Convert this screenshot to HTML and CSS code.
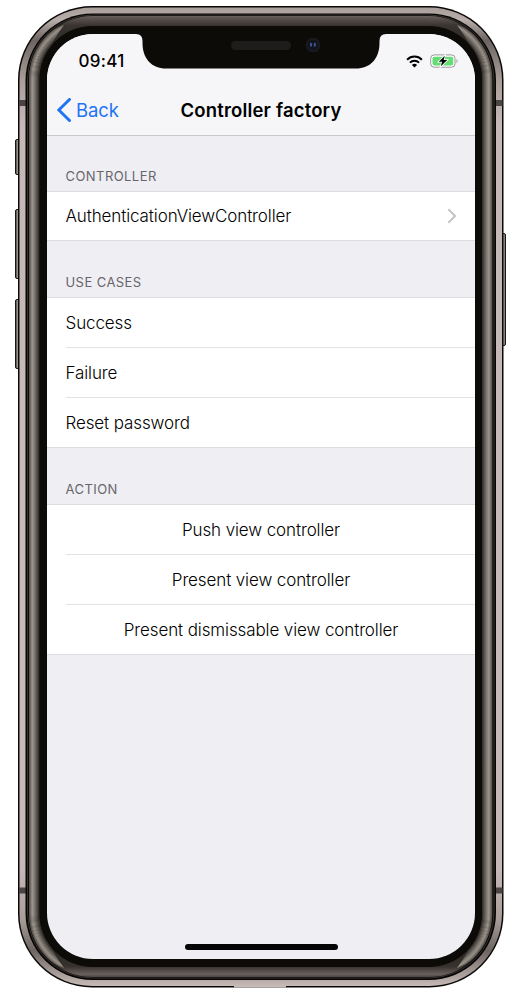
FILE: index.html
```html
<!DOCTYPE html>
<html lang="en">
<head>
<meta charset="utf-8">
<title>Controller factory</title>
<link rel="stylesheet" href="styles.css">
</head>
<body>
<div class="device">
  <svg class="frame" viewBox="0 0 521 993" width="521" height="993" aria-hidden="true">
    <defs>
      <linearGradient id="rim" x1="0" y1="6" x2="0" y2="988" gradientUnits="userSpaceOnUse">
        <stop offset="0" stop-color="#a69c98"/><stop offset=".014" stop-color="#b9aeaa"/><stop offset=".035" stop-color="#6d6562"/><stop offset=".075" stop-color="#a89d99"/><stop offset=".12" stop-color="#c4b9b6"/><stop offset=".88" stop-color="#c4b9b6"/><stop offset=".93" stop-color="#a89d99"/><stop offset=".962" stop-color="#6d6562"/><stop offset=".985" stop-color="#a89c98"/><stop offset="1" stop-color="#cabfbb"/>
      </linearGradient>
      <linearGradient id="band" x1="0" y1="14" x2="0" y2="979" gradientUnits="userSpaceOnUse">
        <stop offset="0" stop-color="#7a7370"/><stop offset=".004" stop-color="#5b5451"/><stop offset=".012" stop-color="#3a3430"/><stop offset=".04" stop-color="#26221f"/><stop offset=".96" stop-color="#26221f"/><stop offset=".987" stop-color="#38322e"/><stop offset=".995" stop-color="#68605c"/><stop offset="1" stop-color="#3a3532"/>
      </linearGradient>
      <linearGradient id="button" x1="0" x2="1"><stop offset="0" stop-color="#3c3836"/><stop offset=".5" stop-color="#b0a7a3"/><stop offset="1" stop-color="#6e6663"/></linearGradient>
      <clipPath id="sheen">
        <path d="M27 94C27 61 36 34 64 25C50 43 41 65 40 94V900C41 928 50 950 64 968C36 958 27 931 27 900Z"/>
        <path d="M494 94C494 61 485 34 457 25C471 43 480 65 481 94V900C480 928 471 950 457 968C485 958 494 931 494 900Z"/>
      </clipPath>
    </defs>
    <g fill="url(#button)" stroke="#191716">
      <rect x="15.500" y="139.500" width="5" height="35" rx="1.500"/>
      <rect x="15.500" y="209.500" width="5" height="69" rx="1.500"/>
      <rect x="15.500" y="299.500" width="5" height="69" rx="1.500"/>
      <rect x="500.500" y="233.500" width="5" height="112" rx="1.500"/>
    </g>
    <rect x="18" y="6" width="485.500" height="981.500" rx="74" fill="#0b0908"/>
    <rect x="19.500" y="7.500" width="482.500" height="978.500" rx="72.500" fill="url(#rim)"/>
    <path fill="#c9bebb" d="M234 986h52v1.500h-52z"/>
    <path fill="#4a4543" d="M19 100h7v6h-7zM19 887.500h7v6h-7zM495.500 100h7v6h-7zM495.500 887.500h7v6h-7z"/>
    <rect x="25.500" y="13.500" width="470.500" height="966.500" rx="67" fill="#070605"/>
    <rect x="27.500" y="15" width="466.500" height="963" rx="65" fill="none" stroke="#4b4542" stroke-width=".7"/>
    <rect x="29" y="16" width="463.500" height="961" rx="63.500" fill="url(#band)"/>
    <g clip-path="url(#sheen)" fill="none" stroke-width="1.300">
      <rect x="29.600" y="16.600" width="462" height="960" rx="63" stroke="#5a5450"/>
      <rect x="30.600" y="17.600" width="460" height="958" rx="62" stroke="#706963"/>
      <rect x="31.600" y="18.600" width="458" height="956" rx="61" stroke="#8b857d"/>
      <rect x="32.600" y="19.600" width="456" height="954" rx="60" stroke="#99938b"/>
      <rect x="33.600" y="20.600" width="454" height="952" rx="59" stroke="#8f8981"/>
      <rect x="34.600" y="21.600" width="452" height="950" rx="58" stroke="#7f7972"/>
      <rect x="35.600" y="22.600" width="450" height="948" rx="57" stroke="#706a64"/>
      <rect x="36.600" y="23.600" width="448" height="946" rx="56" stroke="#5f5a54"/>
      <rect x="37.600" y="24.600" width="446" height="944" rx="55" stroke="#4d4844"/>
      <rect x="38.600" y="25.600" width="444" height="942" rx="54" stroke="#37332f"/>
    </g>
    <rect x="39.500" y="26" width="442.500" height="941" rx="53" fill="#0c0b08"/>
  </svg>

  <main class="screen">
    <header class="top">
      <div class="status">
        <span class="time">09:41</span>
        <span class="indicators">
          <svg width="17" height="13" viewBox="0 0 17 13" fill="none" stroke="#000" stroke-width="2"><path d="M1.100 4.700C5.200.5 11.800.5 15.900 4.700M3.900 7.600C6.500 5.100 10.500 5.100 13.100 7.600"/><path d="M8.500 12.500 5.900 9.900Q8.500 7.800 11.100 9.900Z" fill="#000" stroke="none"/></svg>
          <svg width="29" height="14" viewBox="0 0 29 14"><rect x=".7" y=".9" width="24.300" height="12.300" rx="3.500" fill="#fff" stroke="#98989b"/><rect x="2.500" y="2.700" width="20.700" height="8.700" rx="1.800" fill="#65dc74"/><path d="M26.500 4.700q2 2.300 0 4.600z" fill="#98989b"/><path d="M14.800 1.700 8.800 7.800h3.300l-1.300 4.500 6.400-6.300h-3.500z" fill="#000" stroke="#fff" stroke-width="1.600" paint-order="stroke"/></svg>
        </span>
      </div>
      <nav class="navbar">
        <a class="back"><svg width="15" height="24" viewBox="0 0 15 24" fill="none" stroke="#1f73f5" stroke-width="3"><path d="M12.500 1.500 1.800 12l10.700 10.500" stroke-linecap="round"/></svg><span>Back</span></a>
        <h1 class="title">Controller factory</h1>
      </nav>
    </header>

    <h2 class="label first">CONTROLLER</h2>
    <ul class="group">
      <li class="row"><span>AuthenticationViewController</span><svg width="10" height="16" viewBox="0 0 10 16" fill="none" stroke="#c3c3c8" stroke-width="2"><path d="m1.300 1.300 6.800 6.700-6.800 6.700"/></svg></li>
    </ul>
    <h2 class="label">USE CASES</h2>
    <ul class="group">
      <li class="row"><span>Success</span></li>
      <li class="row"><span>Failure</span></li>
      <li class="row"><span>Reset password</span></li>
    </ul>
    <h2 class="label">ACTION</h2>
    <ul class="group">
      <li class="row center"><span>Push view controller</span></li>
      <li class="row center"><span>Present view controller</span></li>
      <li class="row center"><span>Present dismissable view controller</span></li>
    </ul>
    <div class="home"></div>
  </main>

  <svg class="notch" width="254" height="36" viewBox="134 33 254 36" aria-hidden="true">
    <path fill="#0c0b08" d="M134 33V34H136Q142.500 34 142.500 41V43C142.500 59 152 68.500 166 68.500H356C370 68.500 379.500 59 379.500 43V41Q379.500 34 386 34H388V33Z"/>
    <rect x="231" y="41" width="60" height="9" rx="4.500" fill="#1f1d1c"/>
    <circle cx="313" cy="45" r="7.300" fill="#191a1e"/><circle cx="313" cy="45" r="5" fill="#11131d"/>
    <path d="M311 43.700v2M314.800 43.700v2" stroke="#3b5590" stroke-width="2" stroke-linecap="round"/>
  </svg>
</div>
</body>
</html>
```
FILE: styles.css
```css
* { box-sizing: border-box; }

body {
  margin: 0;
  background: #fff;
  color: #000;
  font-family: Inter, "Liberation Sans", sans-serif;
}

.device {
  position: relative;
  width: 521px;
  height: 993px;
  padding: 34px 46px 34px 47px;
}

.frame {
  position: absolute;
  inset: 0;
}

.notch {
  position: absolute;
  top: 33px;
  left: 134px;
}

.screen {
  position: relative;
  display: flex;
  flex-direction: column;
  width: 428px;
  height: 925px;
  overflow: hidden;
  border-radius: 46px;
  background: #efeef3;
}

.top {
  height: 102px;
  background: #f6f6f8;
  border-bottom: 1px solid #c9c9cd;
}

.status {
  display: flex;
  justify-content: space-between;
  align-items: center;
  height: 54px;
  padding: 0 16px 0 31.500px;
}

.time {
  font-size: 17px;
  font-weight: 500;
  letter-spacing: 0.300px;
}

.indicators {
  display: flex;
  align-items: center;
  gap: 7px;
}

.navbar {
  display: grid;
  grid-template-columns: 1fr auto 1fr;
  align-items: center;
  height: 44px;
  padding: 0 10px;
}

.back {
  display: flex;
  align-items: center;
  gap: 4px;
  color: #1f73f5;
  font-size: 18.500px;
  letter-spacing: -0.100px;
}

.title {
  margin: 0;
  font-size: 18.500px;
  font-weight: 570;
  letter-spacing: 0.160px;
}

.label {
  display: flex;
  align-items: flex-end;
  height: 56px;
  margin: 0;
  padding: 0 18.500px 7px;
  color: #66666b;
  font-size: 13px;
  font-weight: 370;
  letter-spacing: 0.440px;
  line-height: 16px;
}

.first { height: 55px; }

.group {
  margin: 0;
  padding: 0;
  list-style: none;
  background: #fff;
  border-top: 1px solid #dddce1;
  border-bottom: 1px solid #dddce1;
}

.row {
  display: flex;
  justify-content: space-between;
  align-items: center;
  height: 49px;
  margin-left: 18.500px;
  padding-right: 18px;
  font-size: 17px;
  font-weight: 360;
  letter-spacing: -0.110px;
}

.row:first-child:last-child { height: 48px; }

.row + .row {
  height: 50px;
  border-top: 1px solid #e3e3e5;
}

.center {
  justify-content: center;
  padding-right: 18.500px;
}

.home {
  align-self: center;
  width: 153px;
  height: 6px;
  margin: auto 0 9px;
  border-radius: 3px;
  background: #050505;
}
```
